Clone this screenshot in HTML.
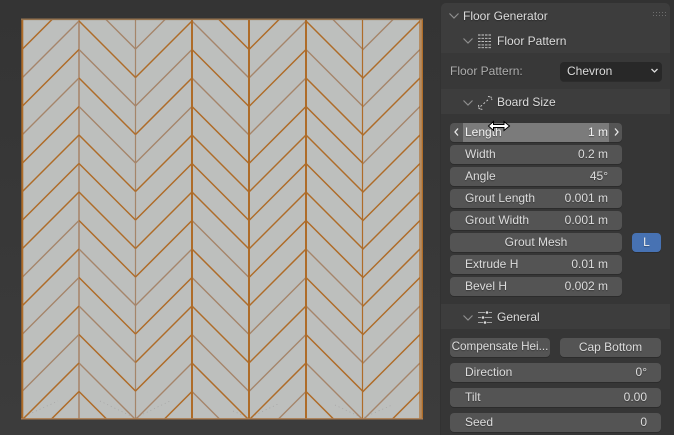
<!DOCTYPE html>
<html><head><meta charset="utf-8"><style>
html,body{margin:0;padding:0;background:#383838}
body{width:674px;height:435px;overflow:hidden;position:relative;font:12px/18px "Liberation Sans",sans-serif;color:#dcdcdc}
div{position:absolute;box-sizing:border-box}
.t{white-space:nowrap;text-shadow:0 1px 1px rgba(0,0,0,.35)}
.f{left:450px;width:172px;height:19px;background:#545454;border-radius:4px;box-shadow:0 1px 0 #2c2c2c;line-height:18px}
.f.w{width:211px}
.f span{position:absolute;left:15px;top:0;white-space:nowrap;text-shadow:0 1px 1px rgba(0,0,0,.35)}
.f b{position:absolute;right:14px;top:0;font-weight:normal;white-space:nowrap;text-shadow:0 1px 1px rgba(0,0,0,.35)}
.b{text-align:center;height:19px;background:#545454;border-radius:4px;box-shadow:0 1px 0 #2c2c2c;line-height:18px;white-space:nowrap;text-shadow:0 1px 1px rgba(0,0,0,.35)}
svg{position:absolute}
</style></head><body>
<div style="left:0;top:0;width:440px;height:435px;background:linear-gradient(#343434,#3c3c3c)"></div>
<svg style="left:0;top:0" width="440" height="435" fill="none">
<defs><clipPath id="c"><rect x="21" y="18.500" width="402" height="401"/></clipPath></defs>
<rect x="22" y="19" width="400.500" height="400" fill="#bdbfbd"/>
<g clip-path="url(#c)">
<g stroke="#a2a2a2" stroke-width=".7" stroke-dasharray="1 3">
<path d="M25 416L58 401M100 401L135 418L170 401M233 411L249 418L280 403M335 405L362.500 418L392 405"/>
</g>
<g stroke="#a5856a" stroke-width="1.400">
<path d="M79 21l-57 57M79 78l-57 57M79 220.500l-57 57M79 277.500l-57 57M79 334.500l-57 57
M79 -7.500l56.500 56.500M79 49.500l56.500 56.500M79 106.500l56.500 56.500M79 249l56.500 56.500M79 306l56.500 56.500M79 363l56.500 56.500
M192 -7.500l-56.500 56.500M192 49.500l-56.500 56.500M192 106.500l-56.500 56.500M192 249l-56.500 56.500M192 363l-56.500 56.500
M192 21l57 57M192 78l57 57M192 220.500l57 57M192 277.500l57 57M192 334.500l57 57M192 391.500l57 57
M306 21l-57 57M306 78l-57 57M306 277.500l-57 57M306 334.500l-57 57M306 391.500l-57 57
M306 -7.500l56.500 56.500M306 49.500l56.500 56.500M306 249l56.500 56.500M306 306l56.500 56.500M306 363l56.500 56.500
M420 -7.500l-57.500 57.500M420 49.500l-57.500 57.500M420 106.500l-57.500 57.500M420 306l-57.500 57.500M420 363l-57.500 57.500"/>
</g>
<path d="M79 19V419" stroke="#aa8d76" stroke-width="1.800"/>
<path d="M135.500 19V419" stroke="#a5856a" stroke-width="1.200"/>
<g stroke="#ae6c29" stroke-width="1.500">
<path d="M79 -7.500l-57 57M79 49.500l-57 57M79 106.500l-57 57M79 135l-57 57M79 163.500l-57 57M79 192l-57 57M79 249l-57 57M79 306l-57 57M79 363l-57 57M79 391.500l-57 57
M79 21l56.500 56.500M79 78l56.500 56.500M79 135l56.500 56.500M79 163.500l56.500 56.500M79 192l56.500 56.500M79 220.500l56.500 56.500M79 277.500l56.500 56.500M79 334.500l56.500 56.500M79 391.500l56.500 56.500
M192 21l-56.500 56.500M192 78l-56.500 56.500M192 135l-56.500 56.500M192 163.500l-56.500 56.500M192 192l-56.500 56.500M192 220.500l-56.500 56.500M192 277.500l-56.500 56.500M192 306l-56.500 56.500M192 334.500l-56.500 56.500M192 391.500l-56.500 56.500
M192 -7.500l57 57M192 49.500l57 57M192 106.500l57 57M192 135l57 57M192 163.500l57 57M192 192l57 57M192 249l57 57M192 306l57 57M192 363l57 57
M306 -7.500l-57 57M306 49.500l-57 57M306 106.500l-57 57M306 135l-57 57M306 163.500l-57 57M306 192l-57 57M306 220.500l-57 57M306 249l-57 57M306 306l-57 57M306 363l-57 57
M306 21l56.500 56.500M306 78l56.500 56.500M306 106.500l56.500 56.500M306 135l56.500 56.500M306 163.500l56.500 56.500M306 192l56.500 56.500M306 220.500l56.500 56.500M306 277.500l56.500 56.500M306 334.500l56.500 56.500M306 391.500l56.500 56.500
M420 21l-57.500 57.500M420 78l-57.500 57.500M420 135l-57.500 57.500M420 163.500l-57.500 57.500M420 192l-57.500 57.500M420 220.500l-57.500 57.500M420 249l-57.500 57.500M420 277.500l-57.500 57.500M420 334.500l-57.500 57.500M420 391.500l-57.500 57.500"/>
<path d="M22.300 19V420M192 19V420M249 19V420M306 19V420M422.300 19V420" stroke-width="2"/>
<path d="M362.500 19V419M420 19V419" stroke-width="1.200"/>
</g>
<path d="M21 19.300H423" stroke="#95734f" stroke-width="1.600"/>
<path d="M21 418.800H423" stroke="#ad7d50" stroke-width="1.400"/>
</g>
</svg>

<div style="left:440px;top:0;width:234px;height:435px;background:#323232"></div>
<div style="left:441px;top:3px;width:229px;height:432px;background:#383838;border-radius:5px 5px 0 0"></div>
<div style="left:441px;top:3px;width:229px;height:50px;background:#3d3d3d;border-radius:5px 5px 0 0"></div>
<div style="left:441px;top:89px;width:229px;height:25px;background:#3d3d3d"></div>
<div style="left:441px;top:304px;width:229px;height:25px;background:#3d3d3d"></div>
<div style="left:441px;top:114px;width:229px;height:190px;background:#363636"></div>
<div style="left:441px;top:329px;width:229px;height:106px;background:#363636"></div>

<svg style="left:448px;top:11px" width="14" height="10" fill="none" stroke="#8e8e8e" stroke-width="1.200"><path d="M1.500 2.500L6 7L10.500 2.500"/></svg>
<div class="t" style="left:463px;top:7px;">Floor Generator</div>
<svg style="left:650px;top:11px" width="18" height="8" fill="#6e6e6e"><rect x="3" y="1" width="1" height="1"/><rect x="6" y="1" width="1" height="1"/><rect x="9" y="1" width="1" height="1"/><rect x="12" y="1" width="1" height="1"/><rect x="15" y="1" width="1" height="1"/><rect x="3" y="4" width="1" height="1"/><rect x="6" y="4" width="1" height="1"/><rect x="9" y="4" width="1" height="1"/><rect x="12" y="4" width="1" height="1"/><rect x="15" y="4" width="1" height="1"/></svg>

<svg style="left:462px;top:36px" width="14" height="10" fill="none" stroke="#8e8e8e" stroke-width="1.200"><path d="M1.500 2.500L6 7L10.500 2.500"/></svg>
<svg style="left:477px;top:33px" width="16" height="16" fill="none" stroke="#cfcfcf" stroke-width=".9" stroke-dasharray="2.500 1"><path d="M1 2H15M1 5.300H15M1 8.600H15M1 11.900H15M1 14.700H15"/></svg>
<div class="t" style="left:497px;top:32px">Floor Pattern</div>

<div class="t" style="left:450px;top:62px;color:#adadad">Floor Pattern:</div>
<div style="left:559.500px;top:62px;width:102px;height:19px;background:#282828;border-radius:4px;box-shadow:0 1px 0 #2c2c2c"></div>
<div class="t" style="left:567px;top:62px">Chevron</div>
<svg style="left:650px;top:67px" width="10" height="8" fill="none" stroke="#dcdcdc" stroke-width="1.300"><path d="M1.500 2L4.500 5L7.500 2"/></svg>

<svg style="left:462px;top:98px" width="14" height="10" fill="none" stroke="#8e8e8e" stroke-width="1.200"><path d="M1.500 2.500L6 7L10.500 2.500"/></svg>
<svg style="left:477px;top:94px" width="17" height="17" fill="none" stroke="#cfcfcf" stroke-width=".9"><path d="M3.500 12.500L12.500 4.500" stroke-dasharray="2 2"/><path d="M1.500 11L2 14.500L5.500 15.500M11 2.500L14 3L15 6" stroke-dasharray="2 .5"/></svg>
<div class="t" style="left:497px;top:93px">Board Size</div>

<div class="f" style="top:123px;background:#555"></div>
<div style="left:463px;top:123px;width:146px;height:19px;background:#7b7b7b"></div>
<svg style="left:452px;top:127px" width="10" height="10" fill="none" stroke="#e8e8e8" stroke-width="1.300"><path d="M6 1.500L3 5L6 8.500"/></svg>
<svg style="left:612px;top:127px" width="10" height="10" fill="none" stroke="#e8e8e8" stroke-width="1.300"><path d="M3 1.500L6 5L3 8.500"/></svg>
<div class="t" style="left:465px;top:123px;color:#f2f2f2">Length</div>
<div class="t" style="right:66px;top:123px;color:#f2f2f2">1 m</div>
<svg style="left:487px;top:119px" width="24" height="14"><path d="M1.500 7L6.500 2.500V5.500H17V2.500L22.500 7L17 11.500V8.500H6.500V11.500Z" fill="#fff" stroke="#000" stroke-width="1"/></svg>

<div class="f" style="top:145px"><span>Width</span><b>0.2 m</b></div>
<div class="f" style="top:167px"><span>Angle</span><b>45°</b></div>
<div class="f" style="top:189px"><span>Grout Length</span><b>0.001 m</b></div>
<div class="f" style="top:211px"><span>Grout Width</span><b>0.001 m</b></div>
<div class="b" style="left:450px;top:233px;width:172px">Grout Mesh</div>
<div class="b" style="left:632px;top:233px;width:29px;background:#4772b3;color:#f0f0f0">L</div>
<div class="f" style="top:255px"><span>Extrude H</span><b>0.01 m</b></div>
<div class="f" style="top:277px"><span>Bevel H</span><b>0.002 m</b></div>

<svg style="left:462px;top:313px" width="14" height="10" fill="none" stroke="#8e8e8e" stroke-width="1.200"><path d="M1.500 2.500L6 7L10.500 2.500"/></svg>
<svg style="left:477px;top:309px" width="17" height="17" fill="none" stroke="#c4c4c4" stroke-width=".8"><path d="M1 3.500H8M12 3.500H15M1 8.500H4M8 8.500H15M1 13.500H6M10 13.500H15"/><circle cx="10" cy="3.500" r="1.300" fill="#e0e0e0" stroke="none"/><circle cx="6" cy="8.500" r="1.300" fill="#e0e0e0" stroke="none"/><circle cx="8" cy="13.500" r="1.300" fill="#e0e0e0" stroke="none"/></svg>
<div class="t" style="left:497px;top:308px">General</div>

<div class="b" style="left:450px;top:338px;width:100px;font-size:11.700px">Compensate Hei...</div>
<div class="b" style="left:560px;top:338px;width:101px">Cap Bottom</div>
<div class="f w" style="top:363px"><span>Direction</span><b>0°</b></div>
<div class="f w" style="top:388px"><span>Tilt</span><b>0.00</b></div>
<div class="f w" style="top:413px"><span>Seed</span><b>0</b></div>
</body></html>
